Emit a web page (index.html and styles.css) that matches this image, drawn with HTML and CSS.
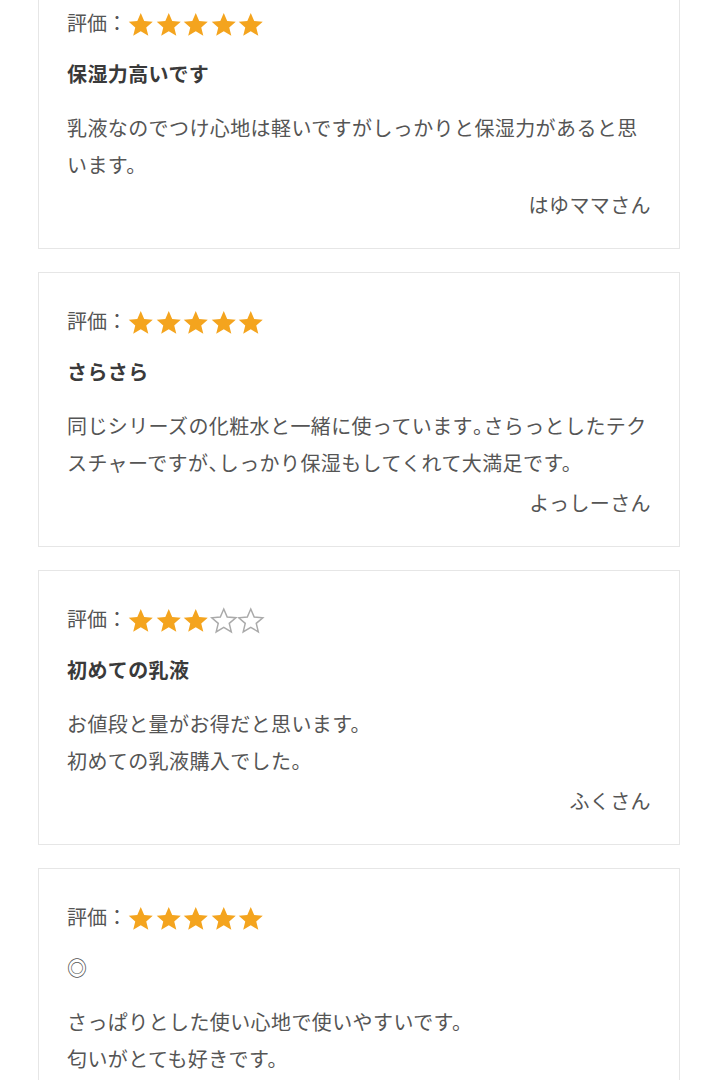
FILE: index.html
```html
<!DOCTYPE html>
<html lang="ja">
<head>
    <meta charset="UTF-8">
    <meta name="viewport" content="width=device-width, initial-scale=1.0">
    <title>レビュー</title>
    <link rel="stylesheet" href="styles.css">
</head>
<body>
    <svg width="0" height="0" class="defs">
        <defs>
            <path id="star" d="M12 1.8l3 7 7.5.6-5.7 4.9 1.8 7.4L12 17.7l-6.6 4 1.8-7.4L1.5 9.4 9 8.8z"/>
        </defs>
    </svg>

    <div class="review-list">
        <div class="review">
            <div class="rating">
                <span class="label">評価：</span>
                <span class="stars">
                    <svg class="star on" viewBox="0 0 24 24"><use href="#star"/></svg>
                    <svg class="star on" viewBox="0 0 24 24"><use href="#star"/></svg>
                    <svg class="star on" viewBox="0 0 24 24"><use href="#star"/></svg>
                    <svg class="star on" viewBox="0 0 24 24"><use href="#star"/></svg>
                    <svg class="star on" viewBox="0 0 24 24"><use href="#star"/></svg>
                </span>
            </div>
            <div class="title">保湿力高いです</div>
            <p class="body">乳液なのでつけ心地は軽いですがしっかりと保湿力があると思います。</p>
            <div class="author">はゆママさん</div>
        </div>

        <div class="review">
            <div class="rating">
                <span class="label">評価：</span>
                <span class="stars">
                    <svg class="star on" viewBox="0 0 24 24"><use href="#star"/></svg>
                    <svg class="star on" viewBox="0 0 24 24"><use href="#star"/></svg>
                    <svg class="star on" viewBox="0 0 24 24"><use href="#star"/></svg>
                    <svg class="star on" viewBox="0 0 24 24"><use href="#star"/></svg>
                    <svg class="star on" viewBox="0 0 24 24"><use href="#star"/></svg>
                </span>
            </div>
            <div class="title">さらさら</div>
            <p class="body">同じシリーズの化粧水と一緒に使っています<span class="half">。</span>さらっとしたテクスチャーですが<span class="half">、</span>しっかり保湿もしてくれて大満足です。</p>
            <div class="author">よっしーさん</div>
        </div>

        <div class="review">
            <div class="rating">
                <span class="label">評価：</span>
                <span class="stars">
                    <svg class="star on" viewBox="0 0 24 24"><use href="#star"/></svg>
                    <svg class="star on" viewBox="0 0 24 24"><use href="#star"/></svg>
                    <svg class="star on" viewBox="0 0 24 24"><use href="#star"/></svg>
                    <svg class="star off" viewBox="0 0 24 24"><use href="#star"/></svg>
                    <svg class="star off" viewBox="0 0 24 24"><use href="#star"/></svg>
                </span>
            </div>
            <div class="title">初めての乳液</div>
            <p class="body">お値段と量がお得だと思います。<br>初めての乳液購入でした。</p>
            <div class="author">ふくさん</div>
        </div>

        <div class="review">
            <div class="rating">
                <span class="label">評価：</span>
                <span class="stars">
                    <svg class="star on" viewBox="0 0 24 24"><use href="#star"/></svg>
                    <svg class="star on" viewBox="0 0 24 24"><use href="#star"/></svg>
                    <svg class="star on" viewBox="0 0 24 24"><use href="#star"/></svg>
                    <svg class="star on" viewBox="0 0 24 24"><use href="#star"/></svg>
                    <svg class="star on" viewBox="0 0 24 24"><use href="#star"/></svg>
                </span>
            </div>
            <div class="title light">◎</div>
            <p class="body">さっぱりとした使い心地で使いやすいです。<br>匂いがとても好きです。</p>
        </div>
    </div>
</body>
</html>
```

FILE: styles.css
```css
body {
    margin: 0;
    background-color: #fff;
    font-family: "Noto Sans CJK JP", "Noto Sans", sans-serif;
    color: #555;
    overflow: hidden;
}
.defs {
    position: absolute;
}
.review-list {
    margin: -26px 37px 0 38px;
    display: flex;
    flex-direction: column;
    gap: 23px;
}
.review {
    border: 1px solid #e6e6e6;
    padding: 29px 28px 25px 28px;
    box-sizing: border-box;
    height: 275px;
}
.rating {
    display: flex;
    align-items: center;
    height: 36px;
}
.label {
    font-size: 20px;
    color: #555;
}
.stars {
    display: flex;
    margin-top: 6px;
}
.star {
    width: 27.5px;
    height: 27.5px;
}
.star.on {
    fill: #f4a41e;
}
.star.off {
    fill: #fff;
    stroke: #aaa;
    stroke-width: 1.3;
}
.title {
    margin-top: 16px;
    font-size: 20px;
    line-height: 36px;
    font-weight: bold;
    color: #3a3a3a;
    letter-spacing: 0.4px;
}
.title.light {
    font-weight: normal;
    color: #555;
}
.body {
    margin: 17px 0 0 0;
    font-size: 20px;
    line-height: 37px;
    color: #555;
    letter-spacing: 0.4px;
}
.half {
    font-feature-settings: "halt";
}
.author {
    margin-top: 4px;
    text-align: right;
    font-size: 20px;
    line-height: 36px;
    color: #555;
    letter-spacing: 0.4px;
}
```
